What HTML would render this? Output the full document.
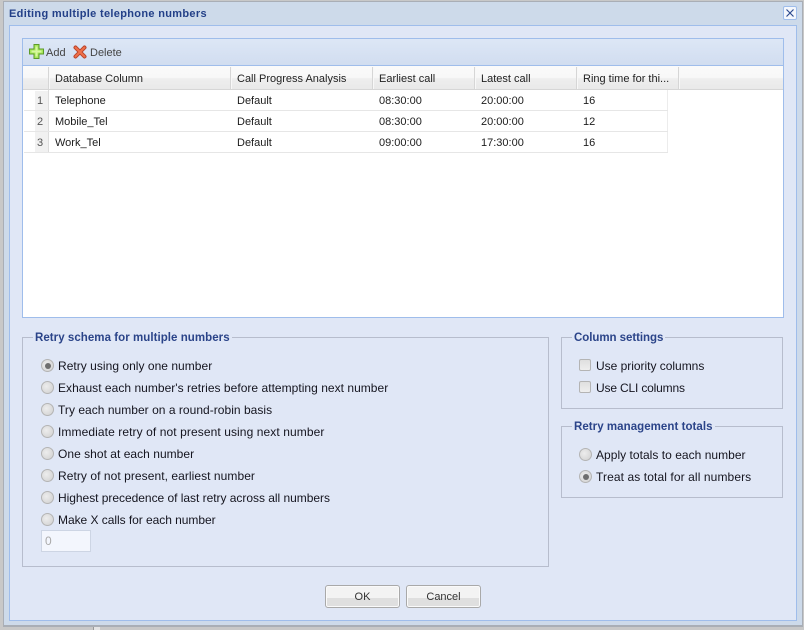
<!DOCTYPE html>
<html><head><meta charset="utf-8"><style>
html,body{margin:0;padding:0;width:804px;height:630px;overflow:hidden;background:#c8c8c8;font-family:"Liberation Sans",sans-serif}
div,span,svg{position:absolute;box-sizing:border-box}
.t{white-space:nowrap;line-height:14px}
.g{font-size:11px;color:#1c1c1c;height:14px}
.h{font-size:11px;color:#222;top:72px}
.sep{width:2px;top:67px;height:22px;background:#d6d6d6;border-right:1px solid #f8f8f8}
.line{height:1px;background:#e6e6e6;left:24px;width:644px}
.lab{font-size:12px;color:#15151f;letter-spacing:.03px}
.leg{font-size:11.5px;font-weight:bold;color:#2b4489;background:#e0e7f6;padding:0 2px;letter-spacing:.05px}
.fs{border:1px solid #b7bdcd}
.r{width:13px;height:13px;border-radius:50%;border:1px solid #b4b4b4;background:radial-gradient(circle at 40% 40%,#ededed,#cfcfcf)}
.r.on:after{content:"";position:absolute;left:2.5px;top:2.5px;width:6px;height:6px;border-radius:50%;background:#6e6e6e}
.c{width:12px;height:12px;border-radius:2px;border:1px solid #b4b4b4;background:linear-gradient(#dfdfdf,#eeeeee)}
.btn{height:23px;width:75px;border:1px solid #a9a9a9;border-radius:3px;background:linear-gradient(#f3f3f3 0,#f3f3f3 56%,#dfdfdf 56%,#dfdfdf 100%);box-shadow:inset 0 0 0 1px #fafafa;font-size:11px;color:#333;text-align:center;line-height:22px}
</style></head><body>
<div style="left:3px;top:1px;width:800px;height:626px;background:#cddaea;border:1px solid #a9aeb6;border-bottom-width:2px"></div>
<div style="left:93px;top:627px;width:7px;height:3px;background:#e4e4e4;border-left:1px solid #999"></div>
<div class="t" style="left:9px;top:7px;font-size:11px;font-weight:bold;color:#234088;letter-spacing:.32px">Editing multiple telephone numbers</div>
<div style="left:783px;top:6px;width:14px;height:14px;border-radius:2px;background:#f4f7fd;border:1px solid #9fbdeb"></div>
<svg style="left:783px;top:6px" width="14" height="14"><path d="M3.5 3.5L10.5 10.5M10.5 3.5L3.5 10.5" stroke="#2d4a8f" stroke-width="1.2" fill="none"/></svg>
<div style="left:9px;top:25px;width:788px;height:596px;background:#e0e7f6;border:1px solid #9fbdeb"></div>

<div style="left:22px;top:38px;width:762px;height:280px;background:#fff;border:1px solid #9fbdeb"></div>
<div style="left:23px;top:39px;width:760px;height:27px;background:linear-gradient(#dde7f6,#d1ddf0);border-bottom:1px solid #9fbdeb"></div>
<svg style="left:29px;top:44px" width="15" height="15"><path d="M5 .5H10V5H14.5V10H10V14.5H5V10H.5V5H5Z" fill="#a6e85a" stroke="#5d9a2a"/><path d="M6.5 2.5H8.5V6.5H12.5V8.5H8.5V12.5H6.5V8.5H2.5V6.5H6.5Z" fill="#d8f7a0"/></svg>
<div class="t" style="left:46px;top:46px;font-size:11px;color:#444">Add</div>
<svg style="left:73px;top:45px" width="14" height="14"><path d="M2.5 2.5L11.5 11.5M11.5 2.5L2.5 11.5" stroke="#b8432a" stroke-width="4" stroke-linecap="round"/><path d="M2.5 2.5L11.5 11.5M11.5 2.5L2.5 11.5" stroke="#f0704a" stroke-width="2" stroke-linecap="round"/></svg>
<div class="t" style="left:90px;top:46px;font-size:11px;color:#444">Delete</div>

<div style="left:23px;top:66px;width:760px;height:24px;background:linear-gradient(#fafafa 0,#f8f8f8 50%,#eee 55%,#e9e9e9 100%);border-bottom:1px solid #d6d6d6"></div>
<div class="sep" style="left:48px"></div><div class="sep" style="left:230px"></div><div class="sep" style="left:372px"></div><div class="sep" style="left:474px"></div><div class="sep" style="left:576px"></div><div class="sep" style="left:678px"></div>
<div class="t h" style="left:55px">Database Column</div>
<div class="t h" style="left:237px">Call Progress Analysis</div>
<div class="t h" style="left:379px">Earliest call</div>
<div class="t h" style="left:481px">Latest call</div>
<div class="t h" style="left:583px">Ring time for thi...</div>

<div style="left:35px;top:91px;width:13px;height:62px;background:#f1f1f1"></div>
<div style="left:48px;top:90px;width:1px;height:63px;background:#dcdcdc"></div>
<div style="left:667px;top:90px;width:1px;height:63px;background:#ececec"></div>
<div class="line" style="top:110px"></div><div class="line" style="top:131px"></div><div class="line" style="top:152px"></div>

<div class="t g" style="left:37px;top:94px;color:#555">1</div><div class="t g" style="left:55px;top:94px">Telephone</div><div class="t g" style="left:237px;top:94px">Default</div><div class="t g" style="left:379px;top:94px">08:30:00</div><div class="t g" style="left:481px;top:94px">20:00:00</div><div class="t g" style="left:583px;top:94px">16</div>
<div class="t g" style="left:37px;top:115px;color:#555">2</div><div class="t g" style="left:55px;top:115px">Mobile_Tel</div><div class="t g" style="left:237px;top:115px">Default</div><div class="t g" style="left:379px;top:115px">08:30:00</div><div class="t g" style="left:481px;top:115px">20:00:00</div><div class="t g" style="left:583px;top:115px">12</div>
<div class="t g" style="left:37px;top:136px;color:#555">3</div><div class="t g" style="left:55px;top:136px">Work_Tel</div><div class="t g" style="left:237px;top:136px">Default</div><div class="t g" style="left:379px;top:136px">09:00:00</div><div class="t g" style="left:481px;top:136px">17:30:00</div><div class="t g" style="left:583px;top:136px">16</div>

<div class="fs" style="left:22px;top:337px;width:527px;height:230px"></div>
<div class="t leg" style="left:33px;top:331px">Retry schema for multiple numbers</div>
<div class="r on" style="left:41px;top:359px"></div><div class="t lab" style="left:58px;top:359px">Retry using only one number</div>
<div class="r" style="left:41px;top:381px"></div><div class="t lab" style="left:58px;top:381px">Exhaust each number's retries before attempting next number</div>
<div class="r" style="left:41px;top:403px"></div><div class="t lab" style="left:58px;top:403px">Try each number on a round-robin basis</div>
<div class="r" style="left:41px;top:425px"></div><div class="t lab" style="left:58px;top:425px;letter-spacing:.09px">Immediate retry of not present using next number</div>
<div class="r" style="left:41px;top:447px"></div><div class="t lab" style="left:58px;top:447px">One shot at each number</div>
<div class="r" style="left:41px;top:469px"></div><div class="t lab" style="left:58px;top:469px;letter-spacing:.06px">Retry of not present, earliest number</div>
<div class="r" style="left:41px;top:491px"></div><div class="t lab" style="left:58px;top:491px;letter-spacing:-.03px">Highest precedence of last retry across all numbers</div>
<div class="r" style="left:41px;top:513px"></div><div class="t lab" style="left:58px;top:513px;letter-spacing:-.04px">Make X calls for each number</div>
<div style="left:41px;top:530px;width:50px;height:22px;background:#f3f6fd;border:1px solid #cdd5e4"></div>
<div class="t" style="left:45px;top:534px;font-size:12px;color:#aaa">0</div>

<div class="fs" style="left:561px;top:337px;width:222px;height:72px"></div>
<div class="t leg" style="left:572px;top:331px;letter-spacing:-.05px">Column settings</div>
<div class="c" style="left:579px;top:359px"></div><div class="t lab" style="left:596px;top:359px;letter-spacing:-.02px">Use priority columns</div>
<div class="c" style="left:579px;top:381px"></div><div class="t lab" style="left:596px;top:381px;letter-spacing:-.17px">Use CLI columns</div>

<div class="fs" style="left:561px;top:426px;width:222px;height:72px"></div>
<div class="t leg" style="left:572px;top:420px">Retry management totals</div>
<div class="r" style="left:579px;top:448px"></div><div class="t lab" style="left:596px;top:448px">Apply totals to each number</div>
<div class="r on" style="left:579px;top:470px"></div><div class="t lab" style="left:596px;top:470px;letter-spacing:.1px">Treat as total for all numbers</div>

<div class="btn" style="left:325px;top:585px">OK</div>
<div class="btn" style="left:406px;top:585px">Cancel</div>
</body></html>
